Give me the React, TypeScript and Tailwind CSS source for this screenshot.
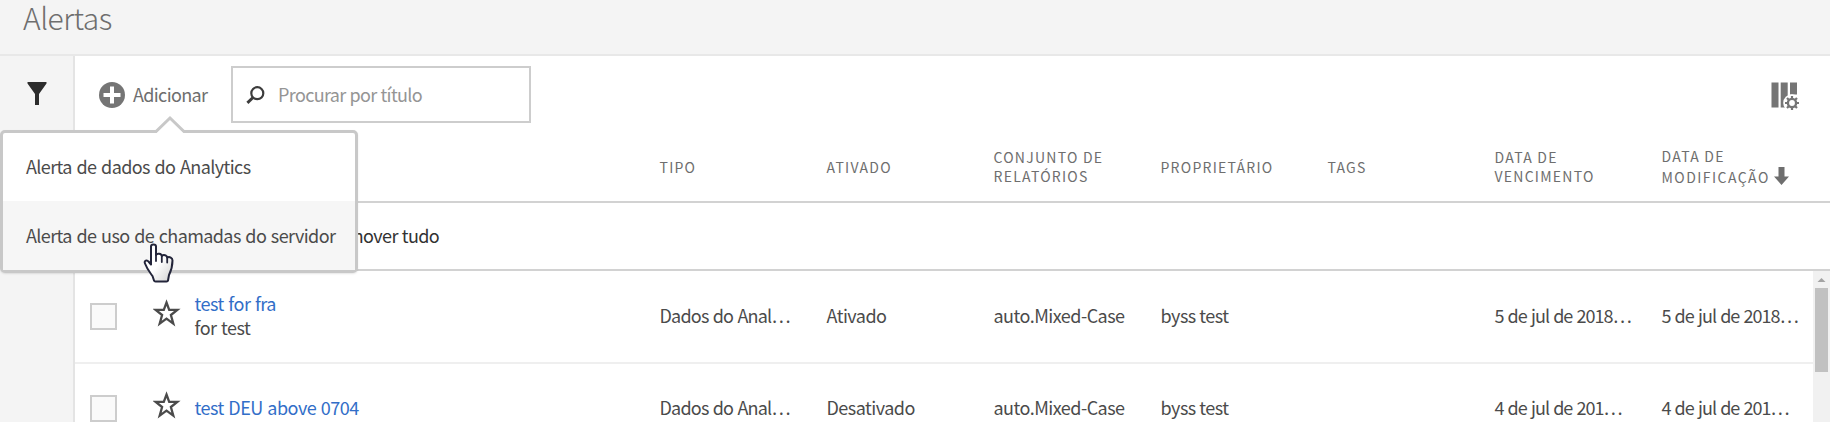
import type { ReactNode } from "react";

type Alert = {
  title: string;
  description?: string;
  type: string;
  enabled: string;
  suite: string;
  owner: string;
  expires: string;
  modified: string;
};

const alerts: Alert[] = [
  {
    title: "test for fra",
    description: "for test",
    type: "Dados do Anal…",
    enabled: "Ativado",
    suite: "auto.Mixed-Case",
    owner: "byss test",
    expires: "5 de jul de 2018…",
    modified: "5 de jul de 2018…",
  },
  {
    title: "test DEU above 0704",
    type: "Dados do Anal…",
    enabled: "Desativado",
    suite: "auto.Mixed-Case",
    owner: "byss test",
    expires: "4 de jul de 201…",
    modified: "4 de jul de 201…",
  },
];

function FilterIcon() {
  return (
    <svg className="h-6 w-5" viewBox="0 0 20 24" fill="#2c2c2c">
      <path d="M0.5 0h19v1.6L12 12v11h-4V12L0.5 1.6z" />
    </svg>
  );
}

function AddIcon() {
  return (
    <svg className="size-[26px] shrink-0" viewBox="0 0 26 26">
      <circle cx="13" cy="13" r="13" fill="#757575" />
      <path d="M13 4.5v17M4.5 13h17" stroke="#fff" strokeWidth="4" />
    </svg>
  );
}

function SearchIcon() {
  return (
    <svg className="h-[18px] w-[19px] shrink-0" viewBox="0 0 19 18" fill="none" stroke="#3c3c3c">
      <circle cx="11.3" cy="7.2" r="6" strokeWidth="2.2" />
      <path d="M7 11.5L1.4 16.8" strokeWidth="3" />
    </svg>
  );
}

function ColumnsIcon() {
  return (
    <svg className="h-[28px] w-[29px]" viewBox="0 0 29 28">
      <path d="M0.5 0.5h7v25h-7zM9.7 0.5h7v25h-7zM19 0.5h7v12h-7z" fill="#757575" />
      <circle cx="21" cy="21" r="8.8" fill="#fff" />
      <circle cx="21" cy="21" r="4.1" fill="none" stroke="#757575" strokeWidth="2.4" />
      <path
        d="M21 14v3M21 25v3M14 21h3M25 21h3M16 16l2 2M24 24l2 2M16 26l2-2M24 18l2-2"
        stroke="#757575"
        strokeWidth="2.2"
      />
    </svg>
  );
}

function SortArrow() {
  return (
    <svg className="h-[18px] w-[15px] shrink-0" viewBox="0 0 15 18" fill="#6e6e6e">
      <path d="M4.5 0h6v9.5H15L7.5 18 0 9.5h4.5z" />
    </svg>
  );
}

function StarIcon() {
  return (
    <svg className="size-[28px]" viewBox="0 0 28 28" fill="none" stroke="#4b4b4b" strokeWidth="2.3">
      <path d="M13.5 3.5l2.7 7.4h8.1l-6.4 5.1 2.4 8.6-6.8-5-6.8 5 2.4-8.6-6.4-5.1h8.1z" />
    </svg>
  );
}

function HandCursor() {
  return (
    <svg className="h-[40px] w-[31px]" viewBox="0 0 31 40">
      <defs>
        <linearGradient id="hand" x1="0" y1="0" x2="1" y2="1">
          <stop offset="0.5" stopColor="#fff" />
          <stop offset="1" stopColor="#d0d0d0" />
        </linearGradient>
      </defs>
      <path
        d="M8 3.5C8 0.8 13 0.8 13 3.5V12C14 10 18.5 10.6 18.8 13C20.5 11.3 24 12.2 24.2 14.5C26.5 13.3 29.5 14.8 29.5 17.5C29.5 24 28.5 27 26 32L25 37.5Q24.8 38.5 23.5 38.5H12.5Q11.3 38.5 11 37.5L9.5 33C7 29.5 4.5 27 2 20.5C0.8 17.5 4 16.5 5.5 18.5L8 21.5Z"
        fill="url(#hand)"
        stroke="#23253a"
        strokeWidth="2"
        strokeLinejoin="round"
      />
      <path d="M13 11v7M18.8 13v6M24.2 14.5v5" stroke="#23253a" strokeWidth="1.8" strokeLinecap="round" />
    </svg>
  );
}

function HeaderCell({ children }: { children: ReactNode }) {
  return <div className="w-[167px] shrink-0">{children}</div>;
}

function Cell({ children, className = "" }: { children?: ReactNode; className?: string }) {
  return <div className={`w-[167px] shrink-0 whitespace-nowrap ${className}`}>{children}</div>;
}

function AlertRow({ alert }: { alert: Alert }) {
  return (
    <div className="flex h-[92px] shrink-0 items-center border-b-2 border-[#efefef] pb-[4px]">
      <div className="ml-[15px] mt-[2px] size-[27px] shrink-0 border-2 border-[#cdcdcd] bg-[#fafafa]" />
      <div className="-mt-[4px] ml-9 w-[41.5px] shrink-0">
        <StarIcon />
      </div>
      <div className="w-[465px] shrink-0 leading-6 tracking-[-0.5px] [word-spacing:1px]">
        <div className="text-[#326ec8]">{alert.title}</div>
        {alert.description && <div>{alert.description}</div>}
      </div>
      <div className="flex tracking-[-0.52px]">
        <Cell className="tracking-[-0.8px] [word-spacing:1px]">{alert.type}</Cell>
        <Cell>{alert.enabled}</Cell>
        <Cell>{alert.suite}</Cell>
        <Cell>{alert.owner}</Cell>
        <Cell />
        <Cell className="tracking-[-0.95px] [word-spacing:1px]">{alert.expires}</Cell>
        <Cell className="tracking-[-0.95px] [word-spacing:1px]">{alert.modified}</Cell>
      </div>
    </div>
  );
}

function AddMenu() {
  return (
    <div className="absolute left-0 top-[130px] h-[143px] w-[358px] rounded-[5px] border-[3px] border-[#c8c8c8] bg-white tracking-[-0.6px] shadow-[0_1px_2px_rgba(0,0,0,0.1)] [word-spacing:1.2px]">
      <svg className="absolute -top-[18px] left-[150px] h-[19px] w-[34px]" viewBox="0 0 34 19">
        <path d="M3 18L17 4l14 14v1H3z" fill="#fff" />
        <path d="M2 16.5h1L17 3l14 13.5h1" fill="none" stroke="#c8c8c8" strokeWidth="3" />
      </svg>
      <div className="flex h-[68px] items-center pb-[3px] pl-[23px]">Alerta de dados do Analytics</div>
      <div className="flex h-[69px] items-center bg-[#f6f6f6] pb-[2px] pl-[23px]">
        Alerta de uso de chamadas do servidor
      </div>
      <div className="absolute left-[140px] top-[110px]">
        <HandCursor />
      </div>
    </div>
  );
}

export default function App() {
  return (
    <div className="relative flex h-[422px] w-[1830px] flex-col overflow-hidden bg-white font-['Noto_Sans_CJK_JP','Noto_Sans',sans-serif] text-[18px] leading-6 text-[#4b4b4b]">
      <header className="h-14 shrink-0 border-b-2 border-[#e8e8e8] bg-[#f4f4f4] pl-[23px]">
        <h1 className="text-[30px] leading-[35px] font-light tracking-[-0.5px] text-[#6e6e6e]">Alertas</h1>
      </header>

      <div className="flex min-h-0 flex-1">
        <aside className="w-[75px] shrink-0 border-r-2 border-[#e4e4e4] bg-[#f4f4f4] pl-[27px] pt-[26px]">
          <FilterIcon />
        </aside>

        <main className="flex min-w-0 flex-1 flex-col">
          <div className="flex h-[77px] shrink-0 items-center pl-6 pr-[30px]">
            <button className="flex w-[132px] items-center gap-2 whitespace-nowrap text-left tracking-[-0.65px] text-[#6e6e6e]">
              <AddIcon />
              <span className="pb-[2px]">Adicionar</span>
            </button>
            <div className="flex h-[57px] w-[300px] items-center gap-[13px] border-2 border-[#cdcdcd] pl-[13px] tracking-[-0.65px] text-[#959595] [word-spacing:0.5px]">
              <SearchIcon />
              <span className="pb-[2px]">Procurar por título</span>
            </div>
            <div className="ml-auto pt-[3px]">
              <ColumnsIcon />
            </div>
          </div>

          <div className="flex h-[70px] shrink-0 items-center border-b-2 border-[#d2d2d2] pl-[584.5px] text-[14px] leading-[19px] tracking-[1.25px] text-[#6e6e6e]">
            <HeaderCell>TIPO</HeaderCell>
            <HeaderCell>ATIVADO</HeaderCell>
            <HeaderCell>
              CONJUNTO DE
              <br />
              RELATÓRIOS
            </HeaderCell>
            <HeaderCell>PROPRIETÁRIO</HeaderCell>
            <HeaderCell>TAGS</HeaderCell>
            <HeaderCell>
              DATA DE
              <br />
              VENCIMENTO
            </HeaderCell>
            <HeaderCell>
              <div className="leading-[21px]">DATA DE</div>
              <div className="flex items-start gap-[4px] leading-[21px] tracking-[1.45px]">
                MODIFICAÇÃO
                <SortArrow />
              </div>
            </HeaderCell>
          </div>

          <div className="flex h-[68px] shrink-0 items-center border-b-2 border-[#d2d2d2] pb-[2px] pl-[252px] tracking-[-0.6px] text-[#323232] [word-spacing:0.5px]">
            Remover tudo
          </div>

          <div className="flex min-h-0 flex-1">
            <div className="flex min-w-0 flex-1 flex-col overflow-hidden pt-[1px]">
              {alerts.map((alert) => (
                <AlertRow key={alert.title} alert={alert} />
              ))}
            </div>
            <div className="flex w-[17px] shrink-0 flex-col items-center bg-[#f1f1f1]">
              <svg className="h-[17px] w-[17px] shrink-0" viewBox="0 0 17 17" fill="#a3a3a3">
                <path d="M4.5 11L8.5 7l4 4z" />
              </svg>
              <div className="h-[84px] w-[13px] bg-[#c1c1c1]" />
            </div>
          </div>
        </main>
      </div>

      <AddMenu />
    </div>
  );
}
